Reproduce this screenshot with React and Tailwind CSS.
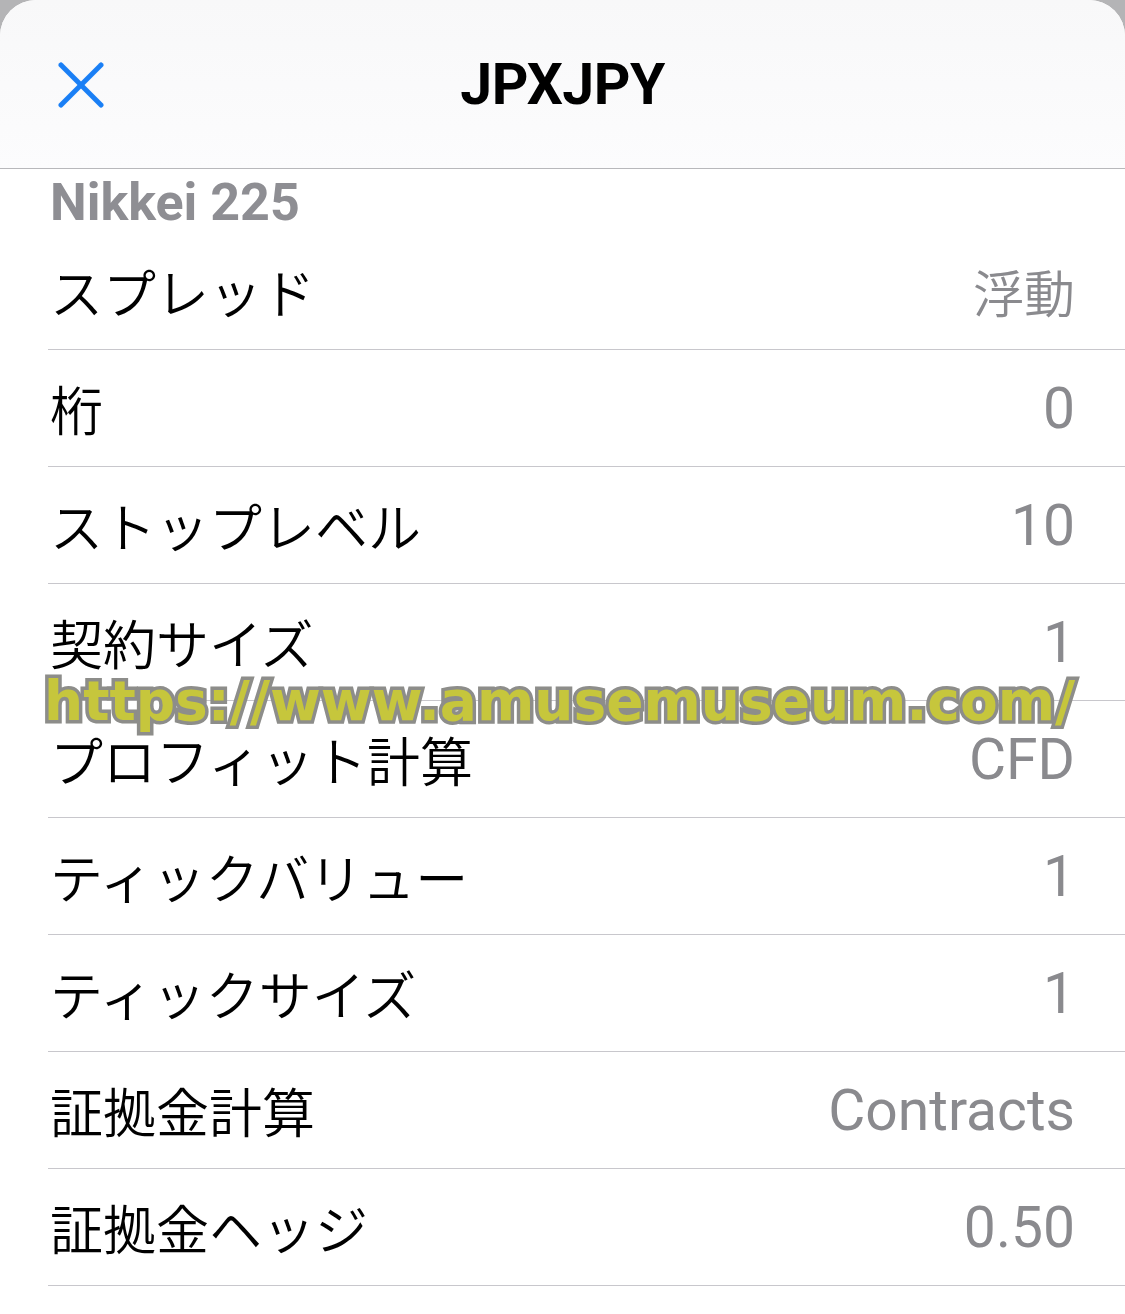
const rows = [
    { label: 'スプレッド', value: '浮動', jpValue: true },
    { label: '桁', value: '0' },
    { label: 'ストップレベル', value: '10' },
    { label: '契約サイズ', value: '1' },
    { label: 'プロフィット計算', value: 'CFD' },
    { label: 'ティックバリュー', value: '1' },
    { label: 'ティックサイズ', value: '1' },
    { label: '証拠金計算', value: 'Contracts' },
    { label: '証拠金ヘッジ', value: '0.50' },
];

const jp = "font-['Noto_Sans_CJK_JP',sans-serif]";

function CloseIcon() {
    return (
        <svg width="46" height="46" viewBox="0 0 46 46" fill="none" stroke="#1a7ff5" strokeWidth="5" strokeLinecap="round">
            <path d="M3 3 L43 43" />
            <path d="M43 3 L3 43" />
        </svg>
    );
}

function InfoRow({ label, value, jpValue }) {
    return (
        <div className="ml-[48px] h-[117px] border-b border-[#c8c7cc] pl-[2px] pr-[50px] flex items-center justify-between">
            <span className={`${jp} font-[350] text-[53px] leading-none text-black`}>{label}</span>
            {jpValue ? (
                <span className={`${jp} font-[350] text-[51px] leading-none text-[#8a8a8e]`}>{value}</span>
            ) : (
                <span className="font-['Roboto',sans-serif] text-[57px] leading-none text-[#8a8a8e]">{value}</span>
            )}
        </div>
    );
}

export default function App() {
    return (
        <div className="w-[1125px] min-h-[1314px] bg-[#b4b4b6]">
            <div className="relative min-h-[1314px] bg-white rounded-t-[36px] overflow-hidden">
                {/* Header */}
                <div className="h-[169px] bg-gradient-to-b from-[#f8f8f9] to-[#fcfcfd] border-b border-[#b8b8bb] grid grid-cols-[1fr_auto_1fr] items-center">
                    <div className="pl-[58px] pt-[1px]">
                        <CloseIcon />
                    </div>
                    <h1 className="font-['Roboto',sans-serif] font-bold text-[57px] leading-none text-black tracking-[-0.5px]">
                        JPXJPY
                    </h1>
                    <div />
                </div>

                {/* Subtitle */}
                <div className="h-[64px] pl-[50px] flex items-start pt-[8px]">
                    <span className="font-['Roboto',sans-serif] font-bold text-[52px] leading-none text-[#8e8e93]">
                        Nikkei 225
                    </span>
                </div>

                {/* Rows */}
                <div>
                    {rows.map((r, i) => (
                        <InfoRow key={i} {...r} />
                    ))}
                </div>

                {/* Watermark */}
                <div className="absolute left-[44px] top-[674px] font-['DejaVu_Sans',sans-serif] font-bold text-[55px] leading-none text-[#c6c63c] [-webkit-text-stroke:7px_#8d8d8a] [paint-order:stroke_fill] whitespace-nowrap pointer-events-none">
                    https://www.amusemuseum.com/
                </div>
            </div>
        </div>
    );
}
